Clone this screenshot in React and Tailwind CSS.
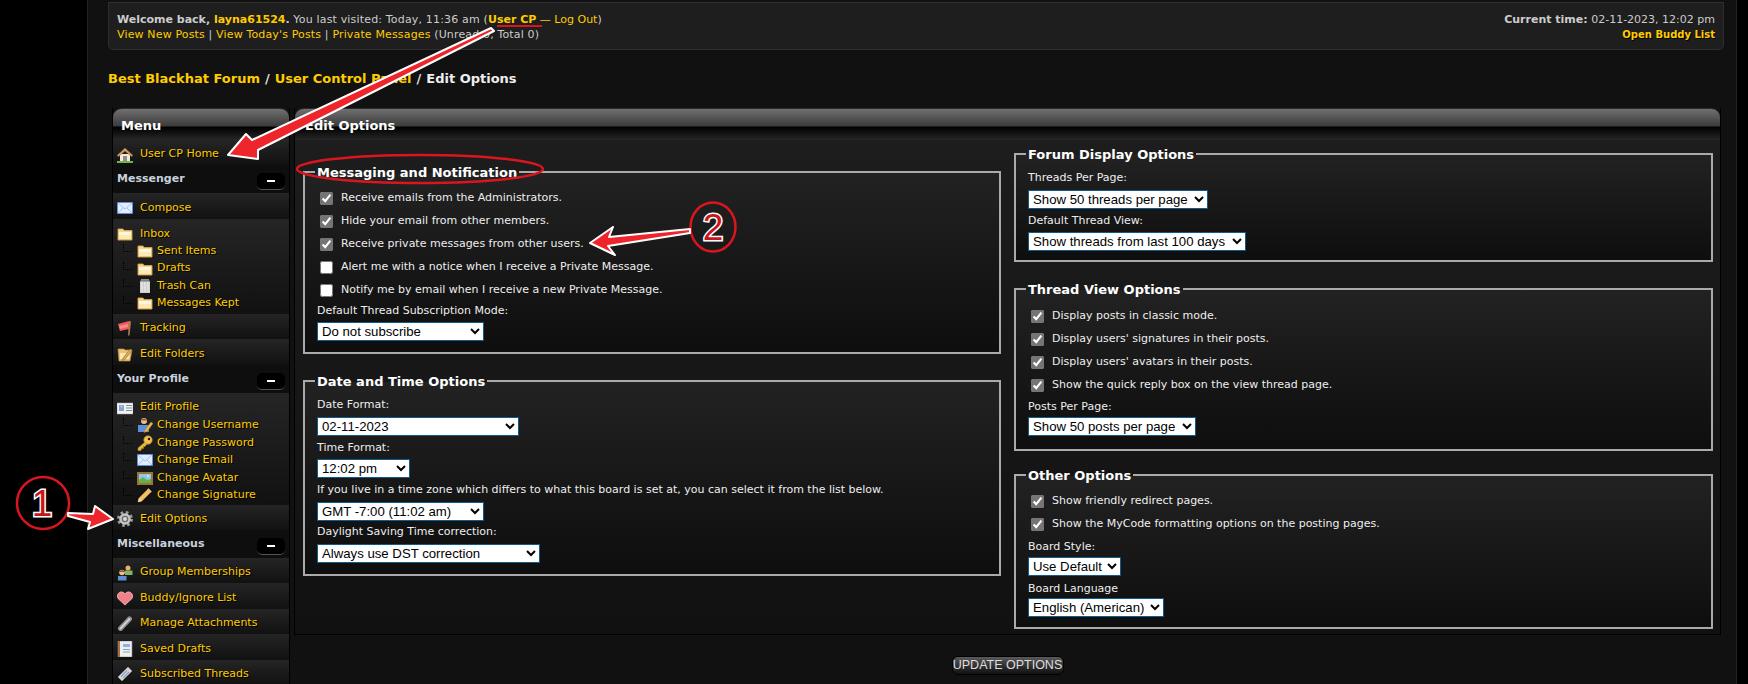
const Icon = ({ children, className = 'w-4 h-4' }) => (
  <svg viewBox="0 0 16 16" className={`${className} shrink-0`}>{children}</svg>
);

const icons = {
  house: (
    <Icon>
      <path d="M3 7h10v7H3z" fill="#f2ead6" />
      <path d="M0 8.500 8 1l8 7.500-1.500 1L8 4 1.500 9.500z" fill="#cfa066" stroke="#94703f" strokeWidth=".5" />
      <path d="M6 9h4v5H6z" fill="#8d8d8d" />
      <path d="M0 14h16v2H0z" fill="#74b24e" />
    </Icon>
  ),
  mail: (
    <Icon>
      <path d="M.5 2.500h15v11H.5z" fill="#e3edfd" stroke="#5f8fd8" />
      <path d="M1 3l7 6 7-6M1 13l5-5M15 13l-5-5" fill="none" stroke="#a3c0ee" />
    </Icon>
  ),
  folder: (
    <Icon>
      <path d="M1 3h5l1 1.500h8V14H1z" fill="#f6d68a" stroke="#d9a24a" strokeWidth=".9" />
      <path d="M2 6h12v3H2z" fill="#fff8e0" />
      <path d="M2 9h12v4H2z" fill="#fce9b4" />
    </Icon>
  ),
  trash: (
    <Icon>
      <path d="M4 1h8v2H4z" fill="#8e8e8e" />
      <path d="M3 3h10v12H3z" fill="#cfcfcf" />
      <path d="M5 4v10M8 4v10M11 4v10" stroke="#f0f0f0" />
      <path d="M3 3h10" stroke="#777777" />
    </Icon>
  ),
  flag: (
    <Icon>
      <path d="M12 1l2 .500-1.500 14H11z" fill="#a8804c" />
      <path d="M1 4l11-3v8L3 11z" fill="#ef5a5a" />
      <path d="M2 6l9-2v3l-8 2z" fill="#f78a8a" />
    </Icon>
  ),
  editFolder: (
    <Icon>
      <path d="M1 3h6l1 1h7l-2 11H2z" fill="#edc173" stroke="#b98d44" strokeWidth=".7" />
      <path d="M3 7h10l-1 6H3z" fill="#f9e6b2" />
      <path d="M6 12l7-9 2 1.500-7 9-3 1z" fill="#d8a94e" stroke="#8d6b2d" strokeWidth=".5" />
    </Icon>
  ),
  card: (
    <Icon>
      <path d="M0 3h16v11H0z" fill="#f2f2f2" stroke="#aaaaaa" strokeWidth=".5" />
      <path d="M2 5h5v6H2z" fill="#7ea6de" />
      <path d="M3.500 5.500h2v2h-2z" fill="#f0b87a" />
      <path d="M9 5.500h6M9 8h6M9 10.500h6" stroke="#7b8da8" />
    </Icon>
  ),
  userEdit: (
    <Icon>
      <circle cx="7" cy="4" r="3" fill="#f0bd8b" />
      <path d="M4 3.500C4 1 10 1 10 3.500z" fill="#8a5a2b" />
      <path d="M1 8h11v7H1z" fill="#5d8fd6" />
      <path d="M8 13l6-8 2 1.500-6 8-3 1z" fill="#edbb4d" stroke="#a77d25" strokeWidth=".5" />
    </Icon>
  ),
  key: (
    <Icon>
      <circle cx="11" cy="5" r="4.200" fill="#f0c24e" stroke="#b78a24" strokeWidth=".7" />
      <circle cx="12" cy="4" r="1.200" fill="#111111" />
      <path d="M8 7 1 13v2.500h3l.500-2h2V11.500h1.500L10 9z" fill="#e7b63f" stroke="#b78a24" strokeWidth=".5" />
    </Icon>
  ),
  picture: (
    <Icon>
      <path d="M0 2h16v13H0z" fill="#9a7434" />
      <path d="M2 4h12v9H2z" fill="#8cc9ee" />
      <path d="M2 10l4-3 4 3 4-1v4H2z" fill="#69b04f" />
      <circle cx="11" cy="6" r="1" fill="#fff2a0" />
    </Icon>
  ),
  pencil: (
    <Icon>
      <path d="M1 15l1-4L11.500 1.500l3 3L5 14z" fill="#efc15f" stroke="#b98a2e" strokeWidth=".6" />
      <path d="M1 15l1-4 3 3z" fill="#f3dcc0" />
      <path d="M11.500 1.500l3 3-1.500 1.500-3-3z" fill="#e2b9a0" />
    </Icon>
  ),
  gear: (
    <Icon>
      <circle cx="8" cy="8" r="6.500" fill="none" stroke="#9a9a9a" strokeWidth="3" strokeDasharray="2.600 2.500" />
      <circle cx="8" cy="8" r="5.800" fill="#c4c4c4" />
      <circle cx="8" cy="8" r="3.300" fill="#6f6f6f" />
      <circle cx="8" cy="8" r="1.900" fill="#dadada" />
    </Icon>
  ),
  group: (
    <Icon>
      <circle cx="11" cy="3" r="2.500" fill="#e5b36c" />
      <path d="M8 5.500h7.500V10H8z" fill="#84b564" />
      <circle cx="5" cy="7.500" r="2.800" fill="#efbd8c" />
      <path d="M2.200 7C2.200 4.500 7.800 4.500 7.800 7z" fill="#8a5a2b" />
      <path d="M1 11h8.500v4.500H1z" fill="#5d8fd6" />
    </Icon>
  ),
  heart: (
    <Icon>
      <path d="M8 15 1 8.500C-1 5 2 1.500 5 2c1.500.200 2.500 1.200 3 2 .500-.800 1.500-1.800 3-2 3-.500 6 3 4 6.500z" fill="#f2808a" stroke="#f5c1c5" strokeWidth=".8" />
    </Icon>
  ),
  clip: (
    <Icon>
      <path d="M3.500 13.500 12.500 4" stroke="#8d8d8d" strokeWidth="5" strokeLinecap="round" />
      <path d="M3.500 13.500 12.500 4" stroke="#dddddd" strokeWidth="1.800" strokeLinecap="round" />
    </Icon>
  ),
  notebook: (
    <Icon>
      <path d="M1 0h14v16H1z" fill="#eeeeee" stroke="#8c8c8c" strokeWidth=".6" />
      <path d="M1 0h2v16H1z" fill="#a0714a" />
      <path d="M6 3h7v3H6z" fill="#8fb2e6" />
      <path d="M6 8.500h7M6 11h7" stroke="#8fa1bd" />
    </Icon>
  ),
  ticket: (
    <Icon>
      <path d="M1 11 11 1l4 4L5 15z" fill="#d5d5d5" stroke="#8f8f8f" />
      <path d="M4 10.500 10 4.500M6 12 12 6" stroke="#87a2c9" strokeWidth="1.200" />
    </Icon>
  ),
};

const rowBg = 'bg-gradient-to-b from-[#252525] to-[#111111]';
const linkText = 'text-[#ffcc00] [text-shadow:1px_1px_0_#000]';

function MenuRow({ icon, label }) {
  return (
    <div className={`flex h-[25.4px] items-center gap-[7px] pl-[4px] pt-[4px] ${rowBg}`}>
      {icons[icon]}
      <span className={linkText}>{label}</span>
    </div>
  );
}

function MenuGroup({ icon, label, items, className, subClass }) {
  return (
    <div className={`pt-[7px] ${rowBg} ${className}`}>
      <div className="mb-[1px] flex h-[16px] items-center gap-[7px] pl-[4px]">
        {icons[icon]}
        <span className={linkText}>{label}</span>
      </div>
      {items.map(([subIcon, subLabel]) => (
        <div key={subLabel} className={`flex items-center pl-[10px] ${subClass}`}>
          <span className="mb-[6px] h-[8px] w-[9px] border-b border-l border-dotted border-[#000]" />
          <span className="ml-[5px] mr-[4px]">{icons[subIcon]}</span>
          <span className={linkText}>{subLabel}</span>
        </div>
      ))}
    </div>
  );
}

function MenuHead({ label }) {
  return (
    <div className="flex h-[28px] justify-between bg-[#0e0e0e] pl-[4px] pr-[4px]">
      <span className="mt-[6px] font-bold text-[#c9d1de]">{label}</span>
      <span className="mt-[8px] flex h-[17px] w-[28px] items-center justify-center rounded-[5px] border-b border-[#555] bg-[#000]">
        <span className="h-[2px] w-[8px] bg-[#fff]" />
      </span>
    </div>
  );
}

function PanelHead({ title, className }) {
  return (
    <div className={`h-[32px] rounded-t-[9px] border-t border-[#2b2b2b] bg-[linear-gradient(to_bottom,#707070_0,#3b3b3b_17px,#000_18px,#2a2a2a_32px)] text-[13px] font-bold leading-[34px] text-[#fff] ${className}`}>
      {title}
    </div>
  );
}

function Box({ title, className = '', children }) {
  return (
    <fieldset className={`border-2 border-[#aaaaaa] bg-gradient-to-b from-[#222222] to-[#0e0e0e] pl-[12px] ${className}`}>
      <legend className="ml-[-2px] h-[16px] px-[2px] text-[13px] font-bold leading-[18px] text-[#fff]">{title}</legend>
      {children}
    </fieldset>
  );
}

function Check({ checked, label }) {
  return (
    <label className="flex h-[23px] items-center pl-[3px]">
      <input type="checkbox" defaultChecked={checked} className="h-[13px] w-[13px] accent-[#757575]" />
      <span className="ml-[8px]">{label}</span>
    </label>
  );
}

function Pick({ width, value }) {
  return (
    <select
      defaultValue={value}
      className={`block h-[19px] border border-[#0f5b8c] bg-[#fff] font-['Liberation_Sans',sans-serif] text-[13.2px] text-[#000] ${width}`}
    >
      <option>{value}</option>
    </select>
  );
}

function Annotations() {
  const red = '#ee262c';
  const ring = '#d9161f';
  return (
    <svg className="pointer-events-none absolute left-0 top-0 h-[684px] w-[1748px]" viewBox="0 0 1748 684">
      <path d="M497 26h45" stroke={ring} strokeWidth="2" />
      <path d="M228 155 246 134 252 140 491 28 494 31 258 150 258 159z" fill={red} stroke="#fff" strokeWidth="2" strokeLinejoin="round" />
      <ellipse cx="420" cy="169" rx="123" ry="14" fill="none" stroke={ring} strokeWidth="2.500" />
      <circle cx="43" cy="503" r="26" fill="none" stroke={ring} strokeWidth="2.500" />
      <text x="42" y="516" textAnchor="middle" fontFamily="Liberation Sans, sans-serif" fontWeight="400" fontSize="37" fill="#c8141c" stroke="#fff" strokeWidth="3" paintOrder="stroke">1</text>
      <path d="M68 513 93 514 95 506 113 519 88 529 90 522 68 516z" fill={red} stroke="#fff" strokeWidth="2" strokeLinejoin="round" />
      <ellipse cx="713" cy="227" rx="22.500" ry="24.500" fill="none" stroke={ring} strokeWidth="2.500" />
      <text x="713" y="240" textAnchor="middle" fontFamily="Liberation Sans, sans-serif" fontWeight="400" fontSize="37" fill="#c8141c" stroke="#fff" strokeWidth="3" paintOrder="stroke">2</text>
      <path d="M690 229 609 237 613 227 590 243 615 255 608 246 690 233z" fill={red} stroke="#fff" strokeWidth="2" strokeLinejoin="round" />
    </svg>
  );
}

export default function App() {
  return (
    <div className="relative h-[684px] overflow-hidden bg-[#000] font-['DejaVu_Sans',sans-serif] text-[11px] text-[#eeeeee]">
      <div className="ml-[87px] h-[684px] w-[1650px] border-x border-[#222] bg-[#111111] pl-[20px]">
        <div className="mt-0 flex h-[48px] w-[1616px] translate-y-[2px] justify-between rounded-b-[5px] border border-[#2e2e2e] bg-[#1e1e1e] px-[8px] pt-[9px] leading-[15px] text-[#cccccc]">
          <div>
            <div>
              <b>Welcome back, </b>
              <b className="text-[#ffcc00]">layna61524</b>
              <b>.</b>
              <span className="tracking-[0.17px]"> You last visited: Today, 11:36 am (</span>
              <b className="text-[#ffcc00]">User CP</b> <span className="text-[#ffcc00]">— Log Out</span>)
            </div>
            <div className="tracking-[0.15px]">
              <span className="text-[#ffcc00]">View New Posts</span> | <span className="text-[#ffcc00]">View Today's Posts</span> | <span className="text-[#ffcc00]">Private Messages</span> (Unread 0, Total 0)
            </div>
          </div>
          <div className="text-right">
            <div><b>Current time:</b> 02-11-2023, 12:02 pm</div>
            <b className={`text-[10px] ${linkText}`}>Open Buddy List</b>
          </div>
        </div>

        <div className="mb-[21px] mt-[23px] h-[16px] text-[13px] font-bold leading-[16px] text-[#dddddd]">
          <span className="text-[#ffcc00]">Best Blackhat Forum</span>
          <span className="mx-[5px]">/</span>
          <span className="text-[#ffcc00]">User Control Panel</span>
          <span className="mx-[5px]">/</span>
          <span className="text-[#eeeeee]">Edit Options</span>
        </div>

        <div className="ml-[4px] flex gap-[4px]">
          <aside className="w-[178px] shrink-0 border-x border-[#000]">
            <PanelHead title="Menu" className="pl-[8px]" />
            <MenuRow icon="house" label="User CP Home" />
            <MenuHead label="Messenger" />
            <MenuRow icon="mail" label="Compose" />
            <MenuGroup
              icon="folder"
              label="Inbox"
              className="h-[95px]"
              subClass="h-[17.25px]"
              items={[['folder', 'Sent Items'], ['folder', 'Drafts'], ['trash', 'Trash Can'], ['folder', 'Messages Kept']]}
            />
            <MenuRow icon="flag" label="Tracking" />
            <MenuRow icon="editFolder" label="Edit Folders" />
            <MenuHead label="Your Profile" />
            <MenuGroup
              icon="card"
              label="Edit Profile"
              className="h-[112px]"
              subClass="h-[17.5px]"
              items={[['userEdit', 'Change Username'], ['key', 'Change Password'], ['mail', 'Change Email'], ['picture', 'Change Avatar'], ['pencil', 'Change Signature']]}
            />
            <MenuRow icon="gear" label="Edit Options" />
            <MenuHead label="Miscellaneous" />
            <MenuRow icon="group" label="Group Memberships" />
            <MenuRow icon="heart" label="Buddy/Ignore List" />
            <MenuRow icon="clip" label="Manage Attachments" />
            <MenuRow icon="notebook" label="Saved Drafts" />
            <MenuRow icon="ticket" label="Subscribed Threads" />
          </aside>

          <main className="w-[1427px]">
            <div className="border-x border-[#000]">
              <PanelHead title="Edit Options" className="pl-[10px]" />
              <div className="grid h-[494px] grid-cols-[698px_699px] gap-[13px] bg-gradient-to-b from-[#1d1d1d] to-[#111111] pl-[8px]">
                <div className="pt-[24px]">
                  <Box title="Messaging and Notification" className="pb-[11px]">
                    <div className="pt-[7px]">
                      <Check checked label="Receive emails from the Administrators." />
                      <Check checked label="Hide your email from other members." />
                      <Check checked label="Receive private messages from other users." />
                      <Check label="Alert me with a notice when I receive a Private Message." />
                      <Check label="Notify me by email when I receive a new Private Message." />
                    </div>
                    <div className="h-[20px] leading-[18px]">Default Thread Subscription Mode:</div>
                    <Pick width="w-[167px]" value="Do not subscribe" />
                  </Box>
                  <Box title="Date and Time Options" className="mt-[19px] pb-[11px] pt-[4px]">
                    <div className="h-[23.5px] leading-[23px]">Date Format:</div>
                    <Pick width="w-[202px]" value="02-11-2023" />
                    <div className="h-[23.5px] leading-[23px]">Time Format:</div>
                    <Pick width="w-[93px]" value="12:02 pm" />
                    <div className="h-[23.5px] leading-[23px]">If you live in a time zone which differs to what this board is set at, you can select it from the list below.</div>
                    <Pick width="w-[167px]" value="GMT -7:00 (11:02 am)" />
                    <div className="h-[23.5px] leading-[22px]">Daylight Saving Time correction:</div>
                    <Pick width="w-[223px]" value="Always use DST correction" />
                  </Box>
                </div>
                <div className="pt-[6px]">
                  <Box title="Forum Display Options" className="pb-[9px]">
                    <div className="h-[28px] pt-[4px] leading-[23px]">Threads Per Page:</div>
                    <Pick width="w-[180px]" value="Show 50 threads per page" />
                    <div className="h-[23px] leading-[24px]">Default Thread View:</div>
                    <Pick width="w-[218px]" value="Show threads from last 100 days" />
                  </Box>
                  <Box title="Thread View Options" className="mt-[19px] pb-[13px]">
                    <div className="pt-[8px]">
                      <Check checked label="Display posts in classic mode." />
                      <Check checked label="Display users' signatures in their posts." />
                      <Check checked label="Display users' avatars in their posts." />
                      <Check checked label="Show the quick reply box on the view thread page." />
                    </div>
                    <div className="h-[19.5px] leading-[19px]">Posts Per Page:</div>
                    <Pick width="w-[168px]" value="Show 50 posts per page" />
                  </Box>
                  <Box title="Other Options" className="mt-[16px] pb-[10px]">
                    <div className="pt-[7.5px]">
                      <Check checked label="Show friendly redirect pages." />
                      <Check checked label="Show the MyCode formatting options on the posting pages." />
                    </div>
                    <div className="h-[20.5px] leading-[21px]">Board Style:</div>
                    <Pick width="w-[93px]" value="Use Default" />
                    <div className="h-[22px] leading-[26px]">Board Language</div>
                    <Pick width="w-[136px]" value="English (American)" />
                  </Box>
                </div>
              </div>
              <div className="h-[1px] bg-[#000]" />
            </div>
            <div className="mt-[21px] flex justify-center">
              <button className="h-[19px] w-[112px] rounded-[6px] border border-[#000] bg-gradient-to-b from-[#5a5a5a] to-[#111111] font-['Liberation_Sans',sans-serif] text-[12.5px] leading-[17px] text-[#dddddd]">
                UPDATE OPTIONS
              </button>
            </div>
          </main>
        </div>
      </div>
      <Annotations />
    </div>
  );
}
